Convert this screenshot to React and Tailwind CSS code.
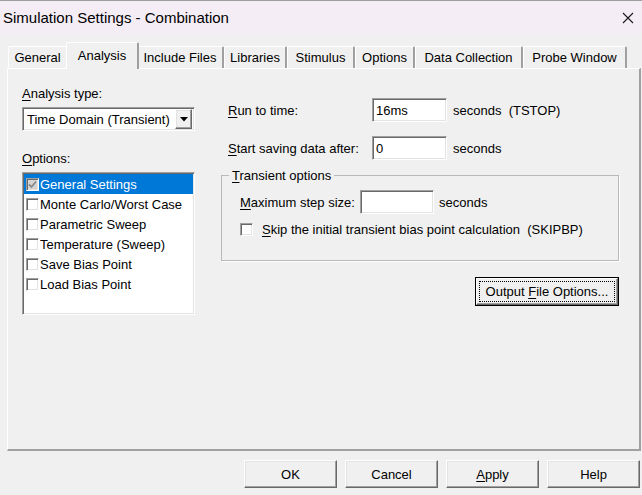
const sunken =
  "bg-white border border-t-[#a0a0a0] border-l-[#a0a0a0] border-r-white border-b-white shadow-[inset_1px_1px_0_#696969,inset_-1px_-1px_0_#e3e3e3]";
const raised =
  "bg-[#f0f0f0] border border-t-white border-l-white border-r-[#696969] border-b-[#696969] shadow-[inset_-1px_-1px_0_#a0a0a0,inset_1px_1px_0_#e3e3e3]";

const tabs = [
  { label: "General", w: "w-[60px]" },
  { label: "Analysis", w: "w-[73px]", active: true },
  { label: "Include Files", w: "w-[87px]" },
  { label: "Libraries", w: "w-[63px]" },
  { label: "Stimulus", w: "w-[68px]" },
  { label: "Options", w: "w-[60px]" },
  { label: "Data Collection", w: "w-[108px]" },
  { label: "Probe Window", w: "w-[104px]" },
];

const options = [
  "General Settings",
  "Monte Carlo/Worst Case",
  "Parametric Sweep",
  "Temperature (Sweep)",
  "Save Bias Point",
  "Load Bias Point",
];

function Mn({ children }) {
  return <span className="underline underline-offset-2">{children}</span>;
}

function Check({ on }) {
  return (
    <span
      className={`w-[13px] h-[13px] shrink-0 flex items-center justify-center border border-t-[#a0a0a0] border-l-[#a0a0a0] border-r-white border-b-white shadow-[inset_1px_1px_0_#696969,inset_-1px_-1px_0_#e3e3e3] ${
        on ? "bg-[#d4d4d4]" : "bg-white"
      }`}
    >
      {on && (
        <svg width="9" height="9" viewBox="0 0 9 9">
          <path d="M1 4.5 L3.5 7 L8 1.5" fill="none" stroke="#8a8a8a" strokeWidth="1.8" />
        </svg>
      )}
    </span>
  );
}

function Tab({ label, w, active }) {
  if (active) {
    return (
      <div
        className={`${w} -mx-[2px] h-[27px] -mb-px relative z-10 bg-[#f0f0f0] border-l border-t border-white border-r-2 border-r-[#a0a0a0] rounded-t-[2px] flex justify-center pt-[5px]`}
      >
        {label}
      </div>
    );
  }
  return (
    <div
      className={`${w} h-[22px] border-l border-t border-white border-r-2 border-r-[#a0a0a0] rounded-t-[2px] flex justify-center pt-[3px]`}
    >
      {label}
    </div>
  );
}

function Btn({ children, w = "w-[93px]" }) {
  return (
    <button className={`${raised} ${w} h-[28px] flex items-center justify-center`}>
      {children}
    </button>
  );
}

export default function App() {
  return (
    <div className="w-[642px] h-[495px] bg-[#f0f0f0] flex flex-col font-['Liberation_Sans',Arial,sans-serif] text-[13px] leading-[15px] text-black border-t border-[#9e9e9e] overflow-hidden">
      <div className="h-[34px] bg-[#f4edf6] flex items-center justify-between pl-[3px] pr-[8px] shrink-0">
        <span className="text-[15px] leading-[20px]">Simulation Settings - Combination</span>
        <svg width="12" height="12" viewBox="0 0 12 12">
          <path d="M1 1 L11 11 M11 1 L1 11" stroke="#1a1a1a" strokeWidth="1.1" />
        </svg>
      </div>

      <div className="h-[33px] flex items-end pl-[8px] shrink-0">
        {tabs.map((t) => (
          <Tab key={t.label} {...t} />
        ))}
      </div>

      <div className="ml-[7px] w-[634px] h-[383px] border-l border-t border-white border-r-2 border-r-[#a0a0a0] border-b-2 border-b-[#a0a0a0] flex shrink-0">
        <div className="w-[213px] pl-[14px] pt-[17px] flex flex-col">
          <div>
            <Mn>A</Mn>nalysis type:
          </div>
          <div className={`${sunken} mt-[6px] w-[173px] h-[24px] flex items-center pl-[4px] pr-[2px]`}>
            <span className="flex-1 text-[13px]">Time Domain (Transient)</span>
            <span className={`${raised} w-[17px] h-[20px] flex items-center justify-center`}>
              <svg width="8" height="5" viewBox="0 0 8 5">
                <path d="M0 0 H8 L4 4.5 Z" fill="#000" />
              </svg>
            </span>
          </div>
          <div className="mt-[20px]">
            <Mn>O</Mn>ptions:
          </div>
          <div className={`${sunken} mt-[6px] w-[173px] h-[143px] pt-[1px] px-[1px]`}>
            {options.map((o, i) => (
              <div
                key={o}
                className={`h-[20px] flex items-center gap-[1px] pl-[2px] ${
                  i === 0 ? "bg-[#0078d7] text-white" : ""
                }`}
              >
                <Check on={i === 0} />
                <span>{o}</span>
              </div>
            ))}
          </div>
        </div>

        <div className="w-[398px] pt-[29px] flex flex-col">
          <div className="flex items-center h-[24px] pl-[7px]">
            <span className="w-[144px]">
              <Mn>R</Mn>un to time:
            </span>
            <span className={`${sunken} w-[75px] h-[24px] flex items-center pl-[3px]`}>16ms</span>
            <span className="ml-[6px]">seconds&nbsp;&nbsp;(TSTOP)</span>
          </div>
          <div className="flex items-center h-[24px] pl-[7px] mt-[14px]">
            <span className="w-[144px]">
              <Mn>S</Mn>tart saving data after:
            </span>
            <span className={`${sunken} w-[75px] h-[24px] flex items-center pl-[3px]`}>0</span>
            <span className="ml-[6px]">seconds</span>
          </div>

          <fieldset className="mt-[8px] h-[93px] border border-[#b9b9b9] shadow-[1px_1px_0_#fff]">
            <legend className="ml-[7px] px-[3px]">
              <Mn>T</Mn>ransient options
            </legend>
            <div className="pl-[18px] pr-[8px]">
              <div className="flex items-center h-[24px] mt-[7px]">
                <span className="w-[120px]">
                  <Mn>M</Mn>aximum step size:
                </span>
                <span className={`${sunken} w-[74px] h-[24px]`} />
                <span className="ml-[5px]">seconds</span>
              </div>
              <div className="flex items-center mt-[8px] h-[15px]">
                <Check />
                <span className="ml-[9px]">
                  <Mn>S</Mn>kip the initial transient bias point calculation&nbsp;&nbsp;(SKIPBP)
                </span>
              </div>
            </div>
          </fieldset>

          <div className="flex justify-end mt-[16px]">
            <button className="w-[144px] h-[29px] border border-black bg-[#f0f0f0]">
              <span className="h-full flex p-[2px] border border-t-white border-l-white border-r-[#696969] border-b-[#696969] shadow-[inset_-1px_-1px_0_#a0a0a0]">
                <span className="flex-1 flex items-center justify-center border border-dotted border-black">
                  Output&nbsp;<Mn>F</Mn>ile Options...
                </span>
              </span>
            </button>
          </div>
        </div>
      </div>

      <div className="flex justify-end gap-[8px] pr-[2px] mt-[9px]">
        <Btn>OK</Btn>
        <Btn>Cancel</Btn>
        <Btn>
          <Mn>A</Mn>pply
        </Btn>
        <Btn>Help</Btn>
      </div>
    </div>
  );
}
